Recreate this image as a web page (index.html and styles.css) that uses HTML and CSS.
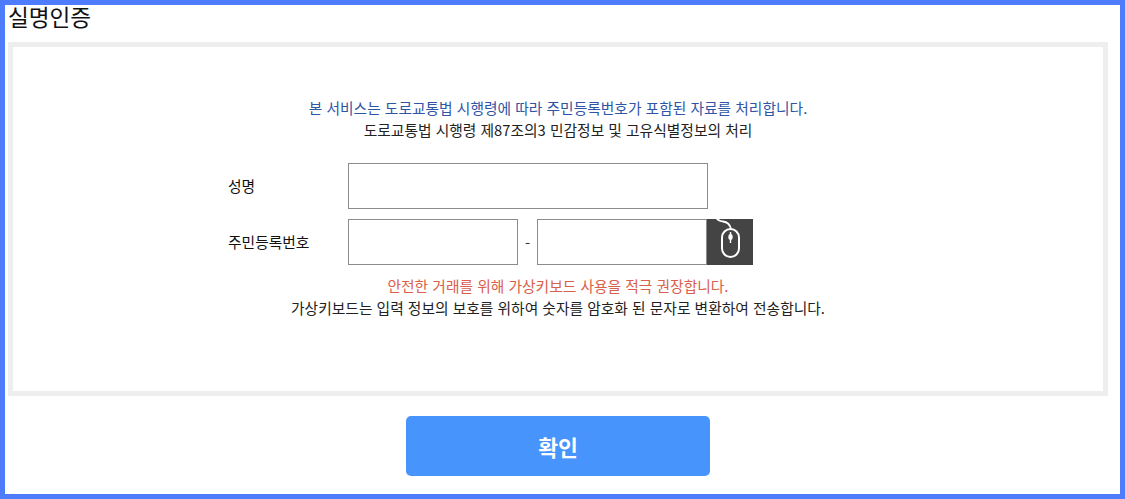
FILE: index.html
```html
<!DOCTYPE html>
<html lang="ko">
<head>
<meta charset="utf-8">
<title>실명인증</title>
<link rel="stylesheet" href="styles.css">
</head>
<body>
<div class="frame">
  <h1 class="title">실명인증</h1>
  <section class="panel">
    <p class="notice notice-blue">본 서비스는 도로교통법 시행령에 따라 주민등록번호가 포함된 자료를 처리합니다.</p>
    <p class="notice">도로교통법 시행령 제87조의3 민감정보 및 고유식별정보의 처리</p>
    <form class="form">
      <div class="row">
        <label class="label">성명</label>
        <input class="input input-name" type="text">
      </div>
      <div class="row">
        <label class="label">주민등록번호</label>
        <input class="input input-id" type="text">
        <span class="dash">-</span>
        <input class="input input-id" type="text">
        <span class="mouse">
          <svg width="46" height="54" viewBox="0 0 46 54" fill="none" stroke="#fff">
            <path d="M9 2c1 3 3 4 7 4.500s7 3 8 7.500" stroke-width="1.800"/>
            <rect x="15" y="14" width="17" height="28" rx="8.500" stroke-width="2"/>
            <path d="M23.500 17v11" stroke-width="1.400"/>
            <ellipse cx="23.500" cy="22" rx="2.200" ry="3" fill="#fff" stroke="none"/>
          </svg>
        </span>
      </div>
    </form>
    <p class="notice notice-red">안전한 거래를 위해 가상키보드 사용을 적극 권장합니다.</p>
    <p class="notice">가상키보드는 입력 정보의 보호를 위하여 숫자를 암호화 된 문자로 변환하여 전송합니다.</p>
  </section>
  <div class="actions">
    <button class="confirm" type="button">확인</button>
  </div>
</div>
</body>
</html>
```
FILE: styles.css
```css
* { box-sizing: border-box; }
html, body { margin: 0; padding: 0; background: #fff; }
body {
  font-family: "Noto Sans CJK KR", "Noto Sans", sans-serif;
  color: #222;
}
.frame {
  width: 1125px;
  height: 499px;
  border: 5px solid #4d7dfd;
  padding: 0 0 0 3px;
  overflow: hidden;
}
.title {
  margin: 0;
  height: 37px;
  font-size: 22.6px;
  font-weight: 400;
  line-height: 24px;
  color: #111;
}
.panel {
  width: 1100px;
  height: 354px;
  border: 5px solid #eeeeee;
  padding: 50px 0 0;
}
.notice {
  margin: 0;
  height: 22px;
  font-size: 14.75px;
  line-height: 22px;
  text-align: center;
  color: #222;
}
.notice-blue { color: #2f55a5; }
.notice-red { color: #d9604c; }
.form {
  width: 660px;
  margin: 22px auto 10px;
  display: flex;
  flex-direction: column;
  gap: 10px;
}
.row {
  display: flex;
  align-items: center;
  height: 46px;
}
.label {
  width: 120px;
  margin-bottom: 2px;
  font-size: 14.75px;
  color: #111;
}
.input {
  height: 46px;
  border: 1px solid #8c8c8c;
  background: #fff;
  padding: 0 8px;
  outline: none;
}
.input-name { width: 360px; }
.input-id { width: 170px; }
.dash {
  width: 19px;
  text-align: center;
  font-size: 14.75px;
  color: #333;
}
.mouse {
  width: 46px;
  height: 46px;
  background: #444;
  position: relative;
  display: block;
}
.mouse svg {
  position: absolute;
  left: 0;
  top: -4px;
  overflow: visible;
}
.actions {
  display: flex;
  justify-content: center;
  width: 1100px;
  padding-top: 20px;
}
.confirm {
  width: 304px;
  height: 60px;
  border: 0;
  border-radius: 5px;
  background: #4894fd;
  color: #fff;
  font-family: inherit;
  font-size: 21.6px;
  font-weight: 700;
}
```
